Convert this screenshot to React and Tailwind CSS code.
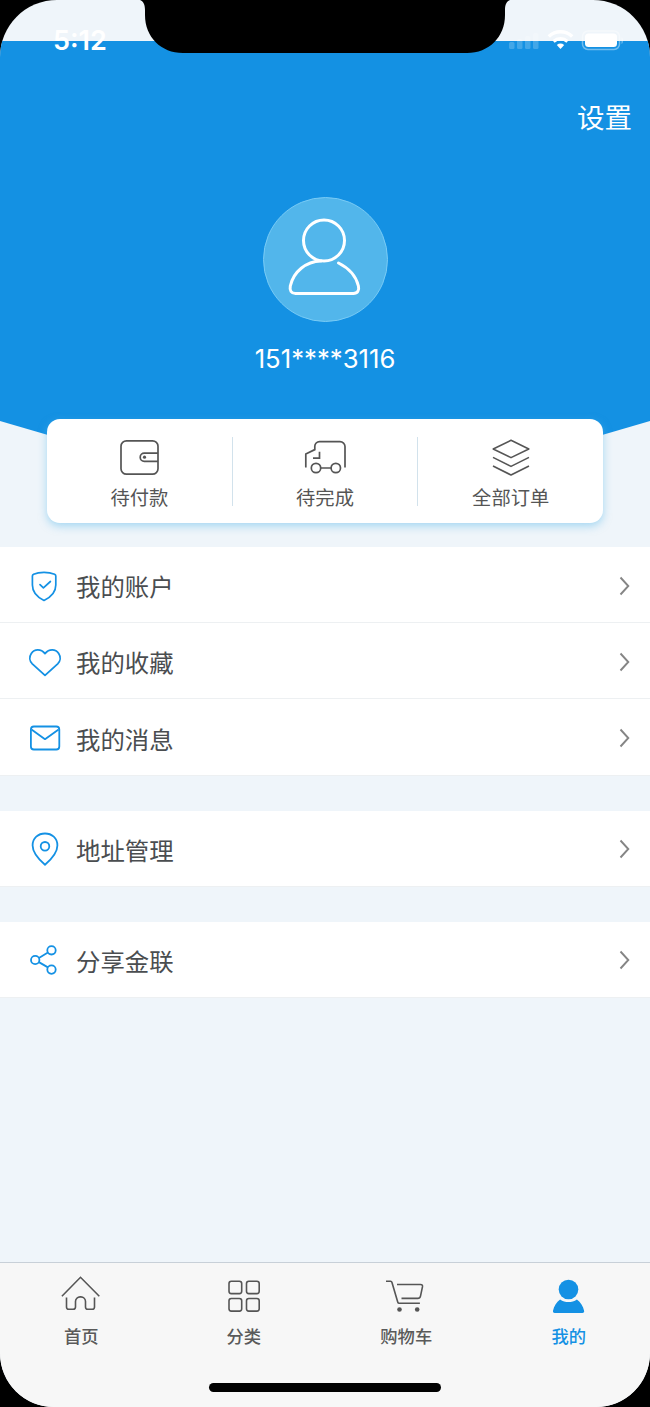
import clsx from "clsx";

const orderTabs = [
  { label: "待付款", icon: WalletIcon },
  { label: "待完成", icon: TruckIcon },
  { label: "全部订单", icon: LayersIcon },
];

const menuGroups = [
  [
    { label: "我的账户", icon: ShieldIcon },
    { label: "我的收藏", icon: HeartIcon },
    { label: "我的消息", icon: MailIcon },
  ],
  [{ label: "地址管理", icon: PinIcon }],
  [{ label: "分享金联", icon: ShareIcon }],
];

const navItems = [
  { label: "首页", icon: HomeIcon },
  { label: "分类", icon: GridIcon },
  { label: "购物车", icon: CartIcon },
  { label: "我的", icon: UserIcon, active: true },
];

function WalletIcon() {
  return (
    <svg className="shrink-0" width="44" height="40" viewBox="0 0 44 40" fill="none" stroke="#555" strokeWidth="1.7">
      <rect x="4" y="3.8" width="37" height="33.4" rx="5.5" />
      <path d="M41 16.1H27.300a4.100 4.100 0 0 0 0 8.200H41" />
      <circle cx="27.500" cy="20.200" r="1.600" fill="#555" stroke="none" />
    </svg>
  );
}

function TruckIcon() {
  return (
    <svg className="shrink-0" width="44" height="40" viewBox="0 0 44 40" fill="none" stroke="#555" strokeWidth="1.7">
      <path d="M2.8 30.5V17l9-4.400V9.300a4.700 4.700 0 0 1 4.700-4.700H37a5 5 0 0 1 5 5v21" />
      <path d="M16.500 14.800v6.400H10M17.800 31H28" />
      <circle cx="13" cy="31" r="4.700" />
      <circle cx="32.800" cy="31" r="4.700" />
    </svg>
  );
}

function LayersIcon() {
  return (
    <svg className="shrink-0" width="44" height="40" viewBox="0 0 44 40" fill="none" stroke="#555" strokeWidth="1.6" strokeLinejoin="round">
      <path d="M22 3.3 39.8 12 22 20.6 4.2 12z" />
      <path d="m4 20.4 18 9 18-9M4 29l18 9 18-9" />
    </svg>
  );
}

function ShieldIcon() {
  return (
    <svg width="34" height="36" viewBox="0 0 34 36" fill="none" stroke="#1491e4" strokeWidth="1.7" strokeLinejoin="round" strokeLinecap="round">
      <path d="M16 4.4c-4 0-8 .8-10.4 1.9-.8.4-1.2.9-1.2 1.7V17c0 7.5 5 12.3 11.6 15.4C22.7 29.3 27.8 24.5 27.8 17V8c0-.8-.4-1.3-1.2-1.7C24 5.2 20 4.4 16 4.4z" />
      <path d="m12 16.6 3.4 3.3 7-6.4" />
    </svg>
  );
}

function HeartIcon() {
  return (
    <svg width="34" height="36" viewBox="0 0 34 36" fill="none" stroke="#1491e4" strokeWidth="1.8" strokeLinejoin="round">
      <path d="M17 31.4 4.3 19.8C1.5 17 1 12.8 3.3 9.4c3.2-4.7 9.7-4.7 13.7.2 4-4.900 10.500-4.900 13.700-.2 2.300 3.400 1.800 7.600-1 10.400z" />
    </svg>
  );
}

function MailIcon() {
  return (
    <svg width="34" height="36" viewBox="0 0 34 36" fill="none" stroke="#1491e4" strokeWidth="1.8" strokeLinejoin="round">
      <rect x="2.9" y="6.5" width="28.4" height="23" rx="3" />
      <path d="M3.5 9.5 17 19.2l13.6-9.7" />
    </svg>
  );
}

function PinIcon() {
  return (
    <svg width="34" height="36" viewBox="0 0 34 36" fill="none" stroke="#1491e4" strokeWidth="1.8" strokeLinejoin="round">
      <path d="M17 33.7C11 28.5 4.6 21.6 4.6 14.4 4.6 7 10.2 2.5 17 2.5S29.4 7 29.4 14.4c0 7.2-6.4 14.1-12.4 19.3z" />
      <circle cx="17" cy="15.3" r="4.3" />
    </svg>
  );
}

function ShareIcon() {
  return (
    <svg width="34" height="36" viewBox="0 0 34 36" fill="none" stroke="#1491e4" strokeWidth="1.8">
      <circle cx="7.2" cy="18" r="4.2" />
      <circle cx="23.5" cy="8.3" r="4.2" />
      <circle cx="23.5" cy="27.6" r="4.2" />
      <path d="m10.9 15.9 9-5.4M10.9 20.1l9 5.3" />
    </svg>
  );
}

function ChevronIcon() {
  return (
    <svg width="12" height="20" viewBox="0 0 12 20" fill="none" stroke="#858585" strokeWidth="1.9">
      <path d="m1.5 1.5 7.8 8.5-7.8 8.5" />
    </svg>
  );
}

function HomeIcon() {
  return (
    <svg width="40" height="40" viewBox="0 0 40 40" fill="none" stroke="#555" strokeWidth="1.6">
      <path d="M.9 22.300 19.500 3.300l18.800 19" />
      <path d="M5.500 23.500V33a2.300 2.300 0 0 0 2.300 2.300h4.400a2.300 2.300 0 0 0 2.300-2.300v-5.500a4.600 4.600 0 0 1 4.600-4.600h.8a4.600 4.600 0 0 1 4.600 4.600V33a2.300 2.300 0 0 0 2.300 2.300h4.400a2.300 2.300 0 0 0 2.300-2.300v-9.500" />
    </svg>
  );
}

function GridIcon() {
  return (
    <svg width="40" height="40" viewBox="0 0 40 40" fill="none" stroke="#555" strokeWidth="1.6">
      <rect x="5" y="7.2" width="12.7" height="12.4" rx="2.3" />
      <rect x="22.5" y="7.2" width="12.7" height="12.4" rx="2.3" />
      <rect x="5" y="24.5" width="12.7" height="12.6" rx="2.3" />
      <rect x="22.5" y="24.5" width="12.7" height="12.6" rx="2.3" />
    </svg>
  );
}

function CartIcon() {
  return (
    <svg width="40" height="40" viewBox="0 0 40 40" fill="none" stroke="#555" strokeWidth="1.6">
      <path d="M0 7.200h4.600c.7 0 1.100.3 1.300 1l5.900 20.100c.2.700.6 1 1.300 1h20.800" />
      <path d="M11 10.500h23.500c1.500 0 2.200.8 2 2.200l-2 9.400c-.3 1.500-1.300 2.300-2.800 2.300H15.500" />
      <circle cx="13.500" cy="35.500" r="2.300" fill="#555" stroke="none" />
      <circle cx="31.200" cy="35.500" r="2.300" fill="#555" stroke="none" />
    </svg>
  );
}

function UserIcon() {
  return (
    <svg width="40" height="40" viewBox="0 0 40 40" fill="#1491e4">
      <circle cx="19.5" cy="15.5" r="9.800" />
      <path d="M11.100 25.400c5 3.600 11.800 3.600 16.800 0 3.700 2.700 6.300 6.900 7.200 11.400.3 1.300-.3 2.200-1.700 2.200H5.700c-1.400 0-2-.9-1.700-2.200.9-4.500 3.400-8.700 7.100-11.400z" />
    </svg>
  );
}

function StatusBar() {
  return (
    <div className="absolute inset-x-0 top-0 flex h-[54px] items-end justify-between pr-[27px] pl-[53px] text-white">
      <span className="font-[Inter] text-[27px] leading-[26px] font-semibold">
        5:12
      </span>
      <svg width="116" height="24" viewBox="0 0 116 24" fill="#fff">
        <g opacity=".2">
          <rect x="2" y="12" width="5.5" height="7" rx="1.5" />
          <rect x="10" y="9" width="5.5" height="10" rx="1.5" />
          <rect x="18" y="6" width="5.5" height="13" rx="1.5" />
          <rect x="26" y="3" width="5.5" height="16" rx="1.5" />
        </g>
        <g fill="none" stroke="#fff">
          <path d="M41.800 6.500a17 17 0 0 1 23.400 0" strokeWidth="3.500" />
          <path d="M46.500 11.400a10.500 10.500 0 0 1 14 0" strokeWidth="3.300" />
        </g>
        <path d="M49.800 14.900a6 6 0 0 1 7.400 0l-3.700 4z" />
        <rect x="75.500" y="1" width="37" height="18.500" rx="5.500" fill="none" stroke="#fff" strokeWidth="1.500" opacity=".4" />
        <rect x="78" y="3.500" width="32" height="13.500" rx="3.500" />
        <path d="M114.500 7c2 .8 2 6.200 0 7z" opacity=".4" />
      </svg>
    </div>
  );
}

function Notch() {
  return (
    <svg className="absolute top-0 left-[140px]" width="370" height="54" viewBox="0 0 370 54">
      <path d="M0 0h370c-3 1-5 4-5 10v5c0 22-16 38-38 38H43C21 53 5 37 5 15v-5C5 4 3 1 0 0z" />
    </svg>
  );
}

export default function App() {
  return (
    <div className="h-[1407px] w-[650px] bg-black font-['Noto_Sans_CJK_SC',sans-serif]">
      <div className="relative flex h-full flex-col overflow-hidden rounded-t-[57px] rounded-b-[54px] bg-[#eff5fa]">
        {/* profile header */}
        <header className="mt-[41px] flex h-[475px] shrink-0 flex-col items-center bg-[#1491e3] [clip-path:polygon(0_0,100%_0,100%_380px,50%_100%,0_380px)]">
          <button className="mt-[55px] mr-[18px] self-end text-[27.5px] leading-[40px] text-white">
            设置
          </button>
          <div className="mt-[61px] flex size-[125px] shrink-0 items-center justify-center rounded-full border border-[#79cbf5] bg-[#52b6eb]">
            <svg width="84" height="84" viewBox="0 0 84 84" fill="none" stroke="#fff" strokeWidth="3" strokeLinecap="round">
              <circle cx="41" cy="22.5" r="20.5" />
              <path d="M38 43C23 43.500 10.500 53.500 7.300 68c-.9 4.600 1 7.500 5.200 7.500h57.800c4.200 0 6.200-3 5.100-7.500C73 58 65.500 50 55.500 45" />
            </svg>
          </div>
          <p className="mt-[21px] font-[Inter] text-[25.7px] leading-[32px] text-white">
            151****3116
          </p>
        </header>

        {/* order shortcuts */}
        <div className="relative mx-[47px] -mt-[97px] flex h-[104px] shrink-0 items-center rounded-[13px] bg-white shadow-[0_3px_8px_rgba(90,185,235,0.5)]">
          {orderTabs.map(({ label, icon: Icon }, i) => (
            <div
              key={label}
              className={clsx(
                "flex h-[69px] flex-1 flex-col items-center text-[19.3px] leading-[28px] text-[#555]",
                i < 2 && "border-r border-[#d2e2ec]",
              )}
            >
              <Icon />
              <span className="mt-[6px]">{label}</span>
            </div>
          ))}
        </div>

        {/* menu */}
        <main className="mt-[24px] flex flex-1 flex-col gap-[35px]">
          {menuGroups.map((group) => (
            <ul key={group[0].label} className="bg-white">
              {group.map(({ label, icon: Icon }) => (
                <li
                  key={label}
                  className="flex h-[76.2px] items-center border-b border-[#edf0f2] pt-[2px] pr-[19px] pl-[28px]"
                >
                  <Icon />
                  <span className="mt-[2px] ml-[14px] flex-1 text-[24.4px] text-[#4a4d50]">
                    {label}
                  </span>
                  <ChevronIcon />
                </li>
              ))}
            </ul>
          ))}
        </main>

        {/* bottom navigation */}
        <nav className="flex h-[145px] shrink-0 border-t-[1.5px] border-[#c8d0d8] bg-[#f7f7f7] pt-[11px]">
          {navItems.map(({ label, icon: Icon, active }) => (
            <button
              key={label}
              className={clsx(
                "flex flex-1 flex-col items-center text-[17.3px] leading-[26px] font-medium",
                active ? "text-[#1491e4]" : "text-[#5a5a5a]",
              )}
            >
              <Icon />
              <span className="mt-[9px]">{label}</span>
            </button>
          ))}
        </nav>

        <StatusBar />
        <Notch />
        <div className="absolute bottom-[15px] left-[209px] h-[9px] w-[232px] rounded-full bg-black" />
      </div>
    </div>
  );
}
